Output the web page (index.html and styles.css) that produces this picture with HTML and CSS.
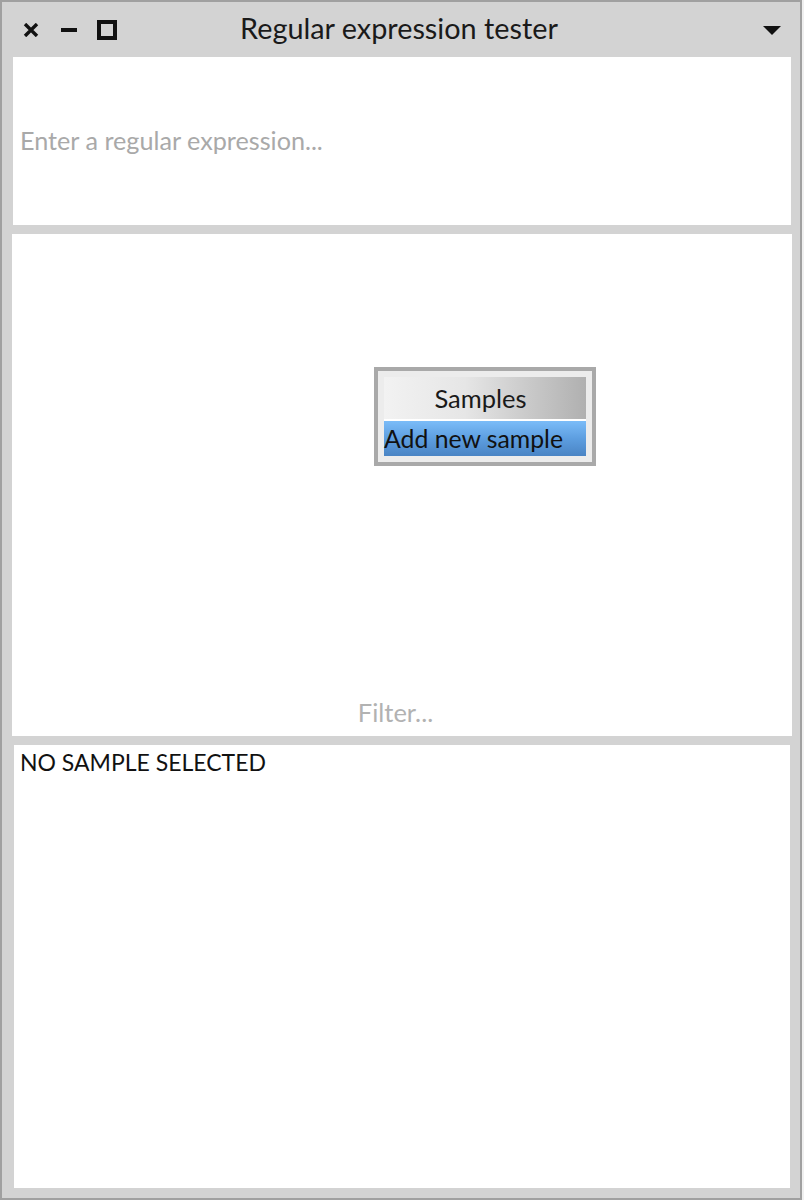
FILE: index.html
```html
<!DOCTYPE html>
<html>
<head>
<meta charset="utf-8">
<link rel="stylesheet" href="styles.css">
</head>
<body>
<div class="window">
  <div class="titlebar">
    <div class="controls">
      <svg class="ic-close" width="16" height="14" viewBox="0 0 16 14"><path d="M2 1 L14 13 M14 1 L2 13" stroke="#111" stroke-width="3.4" fill="none"/></svg>
      <svg class="ic-min" width="16" height="4" viewBox="0 0 16 4"><rect x="0" y="0" width="16" height="4" fill="#111"/></svg>
      <svg class="ic-max" width="20" height="20" viewBox="0 0 20 20"><rect x="2" y="2" width="16" height="16" stroke="#111" stroke-width="4" fill="none"/></svg>
    </div>
    <div class="title">Regular expression tester</div>
    <div class="menu-btn">
      <svg class="ic-menu" width="18" height="9" viewBox="0 0 18 9"><path d="M0 0 H18 L9 9 Z" fill="#111"/></svg>
    </div>
  </div>
  <div class="panel regex">
    <span class="placeholder">Enter a regular expression...</span>
  </div>
  <div class="panel samples">
    <div class="filter">Filter...</div>
    <div class="menu">
      <div class="menu-inner">
        <div class="menu-title">Samples</div>
        <div class="menu-item">Add new sample</div>
      </div>
    </div>
  </div>
  <div class="panel detail">
    <span class="nosel">NO SAMPLE SELECTED</span>
  </div>
</div>
</body>
</html>
```
FILE: styles.css
```css
html, body {
  margin: 0;
  padding: 0;
  background: #f0f0f0;
  font-family: Lato, "Liberation Sans", sans-serif;
}
.window {
  width: 798px;
  height: 1196px;
  border: 2px solid #a0a0a0;
  background: #d3d3d3;
  display: flex;
  flex-direction: column;
}
.titlebar {
  height: 55px;
  flex: none;
  display: flex;
  align-items: center;
}
.controls {
  display: flex;
  align-items: center;
  padding-left: 21px;
  width: 160px;
  box-sizing: border-box;
}
.ic-close { margin-right: 22px; margin-top: 1px; }
.ic-min { margin-right: 20px; }
.ic-max { margin-top: 1px; }
.title {
  flex: 1;
  text-align: center;
  font-size: 28.8px;
  color: #1a1a1a;
  margin-top: -4px;
  padding-right: 4px;
}
.menu-btn {
  width: 160px;
  display: flex;
  justify-content: flex-end;
  padding-right: 19px;
  box-sizing: border-box;
}
.ic-menu { margin-top: 1px; }
.panel {
  background: #fff;
  flex: none;
  position: relative;
}
.regex {
  height: 168px;
  margin: 0 9px 0 11px;
  display: flex;
  align-items: center;
  padding-left: 7px;
}
.placeholder {
  font-size: 25.2px;
  color: #a9a9a9;
  margin-top: -2px;
}
.samples {
  height: 502px;
  margin: 9px 8px 0 10px;
}
.filter {
  position: absolute;
  left: 0;
  right: 13px;
  bottom: 9px;
  text-align: center;
  font-size: 25.5px;
  color: #b2b2b2;
}
.menu {
  position: absolute;
  left: 362px;
  top: 133px;
  width: 202px;
  border: 4px solid #a9a9a9;
  background: #ececec;
  padding: 6px;
}
.menu-inner {
  display: flex;
  flex-direction: column;
  gap: 2px;
  background: #fff;
}
.menu-title {
  height: 42px;
  line-height: 42px;
  text-align: center;
  padding-right: 9px;
  font-size: 25.5px;
  color: #1a1a1a;
  background: linear-gradient(to right, #f2f2f2 0%, #e6e6e6 40%, #b0b0b0 100%);
}
.menu-item {
  height: 35px;
  line-height: 35px;
  font-size: 24.8px;
  color: #111;
  white-space: nowrap;
  background: linear-gradient(to bottom, #7bbcf8 0%, #5d9ee0 50%, #4a84c4 100%);
}
.detail {
  height: 443px;
  margin: 9px 10px 0 12px;
  padding: 3px 6px;
  box-sizing: border-box;
}
.nosel {
  font-size: 23px;
  color: #111;
}
```
